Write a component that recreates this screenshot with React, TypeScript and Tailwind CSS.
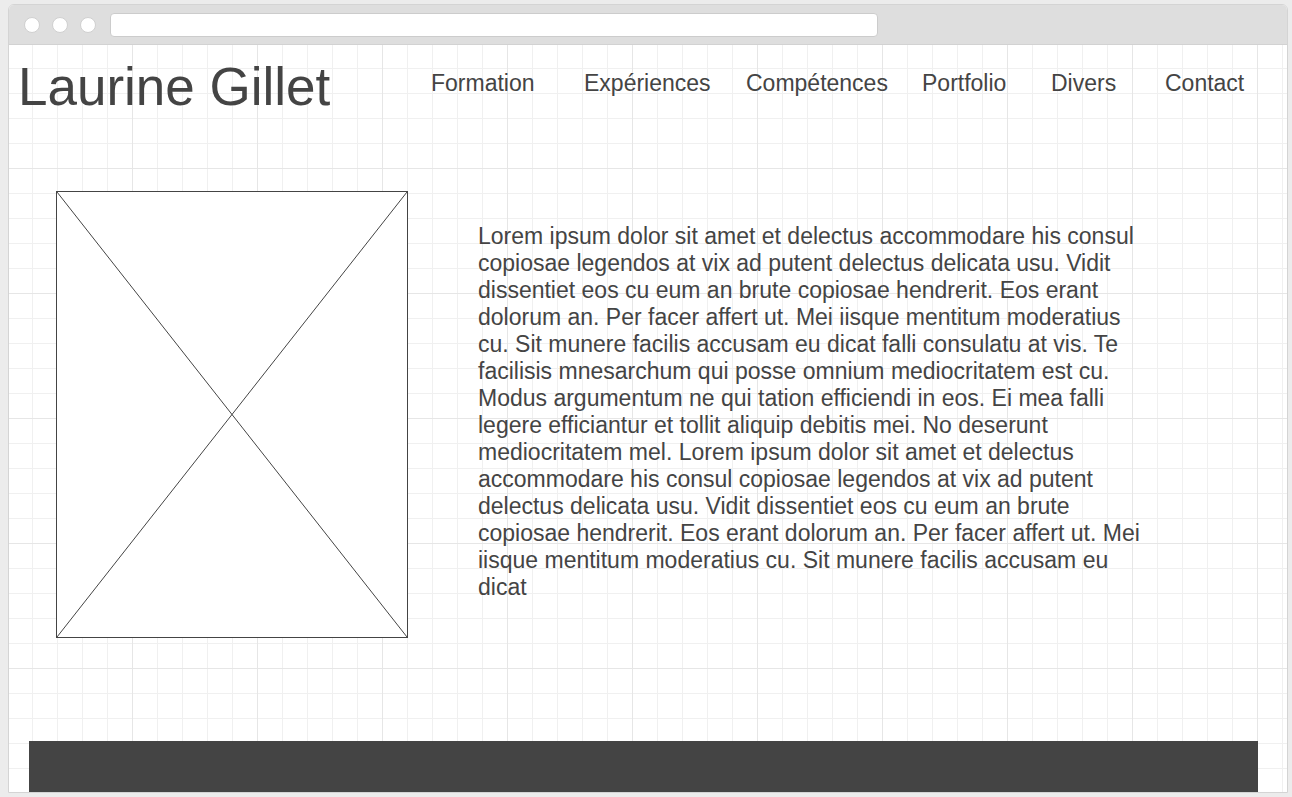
import React from 'react';

const navItems = [
  { label: 'Formation', width: 'w-[153px]' },
  { label: 'Expériences', width: 'w-[162px]' },
  { label: 'Compétences', width: 'w-[176px]' },
  { label: 'Portfolio', width: 'w-[129px]' },
  { label: 'Divers', width: 'w-[114px]' },
  { label: 'Contact', width: 'w-[100px]' },
];

const bio =
  'Lorem ipsum dolor sit amet et delectus accommodare his consul copiosae legendos at vix ad putent delectus delicata usu. Vidit dissentiet eos cu eum an brute copiosae hendrerit. Eos erant dolorum an. Per facer affert ut. Mei iisque mentitum moderatius cu. Sit munere facilis accusam eu dicat falli consulatu at vis. Te facilisis mnesarchum qui posse omnium mediocritatem est cu. Modus argumentum ne qui tation efficiendi in eos. Ei mea falli legere efficiantur et tollit aliquip debitis mei. No deserunt mediocritatem mel. Lorem ipsum dolor sit amet et delectus accommodare his consul copiosae legendos at vix ad putent delectus delicata usu. Vidit dissentiet eos cu eum an brute copiosae hendrerit. Eos erant dolorum an. Per facer affert ut. Mei iisque mentitum moderatius cu. Sit munere facilis accusam eu dicat';

function BrowserBar() {
  return (
    <div className="flex h-[40px] shrink-0 items-center rounded-t-[5px] border-b border-[#d2d2d2] bg-[#dedede] pl-[15px]">
      <div className="flex gap-[12px]">
        <span className="h-[16px] w-[16px] rounded-full border border-[#d0d0d0] bg-white" />
        <span className="h-[16px] w-[16px] rounded-full border border-[#d0d0d0] bg-white" />
        <span className="h-[16px] w-[16px] rounded-full border border-[#d0d0d0] bg-white" />
      </div>
      <div className="ml-[14px] h-[24px] w-[768px] rounded-[4px] border border-[#cccccc] bg-white" />
    </div>
  );
}

function PicturePlaceholder() {
  return (
    <div className="h-[447px] w-[352px] shrink-0 border border-[#444444] bg-white">
      <svg className="block h-full w-full" viewBox="0 0 350 445" preserveAspectRatio="none">
        <line x1="0" y1="0" x2="350" y2="445" stroke="#444444" strokeWidth="1" />
        <line x1="350" y1="0" x2="0" y2="445" stroke="#444444" strokeWidth="1" />
      </svg>
    </div>
  );
}

export default function App() {
  return (
    <div className="h-[797px] w-[1292px] overflow-hidden bg-[#ececec] pl-[8px] pt-[4px] font-['Liberation_Sans',Arial,sans-serif] text-[#444444]">
      <div className="flex h-[789px] w-[1280px] flex-col rounded-t-[6px] border border-[#d4d4d4] bg-white">
        <BrowserBar />

        <div className="flex flex-1 flex-col bg-[linear-gradient(to_right,#e6e6e6_1px,transparent_1px),linear-gradient(to_bottom,#e6e6e6_1px,transparent_1px),linear-gradient(to_right,#f0f0f0_1px,transparent_1px),linear-gradient(to_bottom,#f0f0f0_1px,transparent_1px)] bg-[length:125px_125px,125px_125px,25px_25px,25px_25px] bg-[position:123px_123px,123px_123px,23px_23px,23px_23px]">
          <header className="flex h-[146px] items-start">
            <h1 className="mt-[15px] w-[422px] pl-[9px] text-[53px] leading-none font-normal">
              Laurine Gillet
            </h1>
            <nav className="mt-[27px] flex">
              {navItems.map((item) => (
                <a key={item.label} className={`${item.width} text-[23px] leading-none`}>
                  {item.label}
                </a>
              ))}
            </nav>
          </header>

          <section className="flex items-start pl-[47px]">
            <PicturePlaceholder />
            <p className="ml-[70px] mt-[32px] w-[670px] text-[23px] leading-[27px]">{bio}</p>
          </section>

          <footer className="mt-auto ml-[20px] h-[51px] w-[1229px] bg-[#444444]" />
        </div>
      </div>
    </div>
  );
}
